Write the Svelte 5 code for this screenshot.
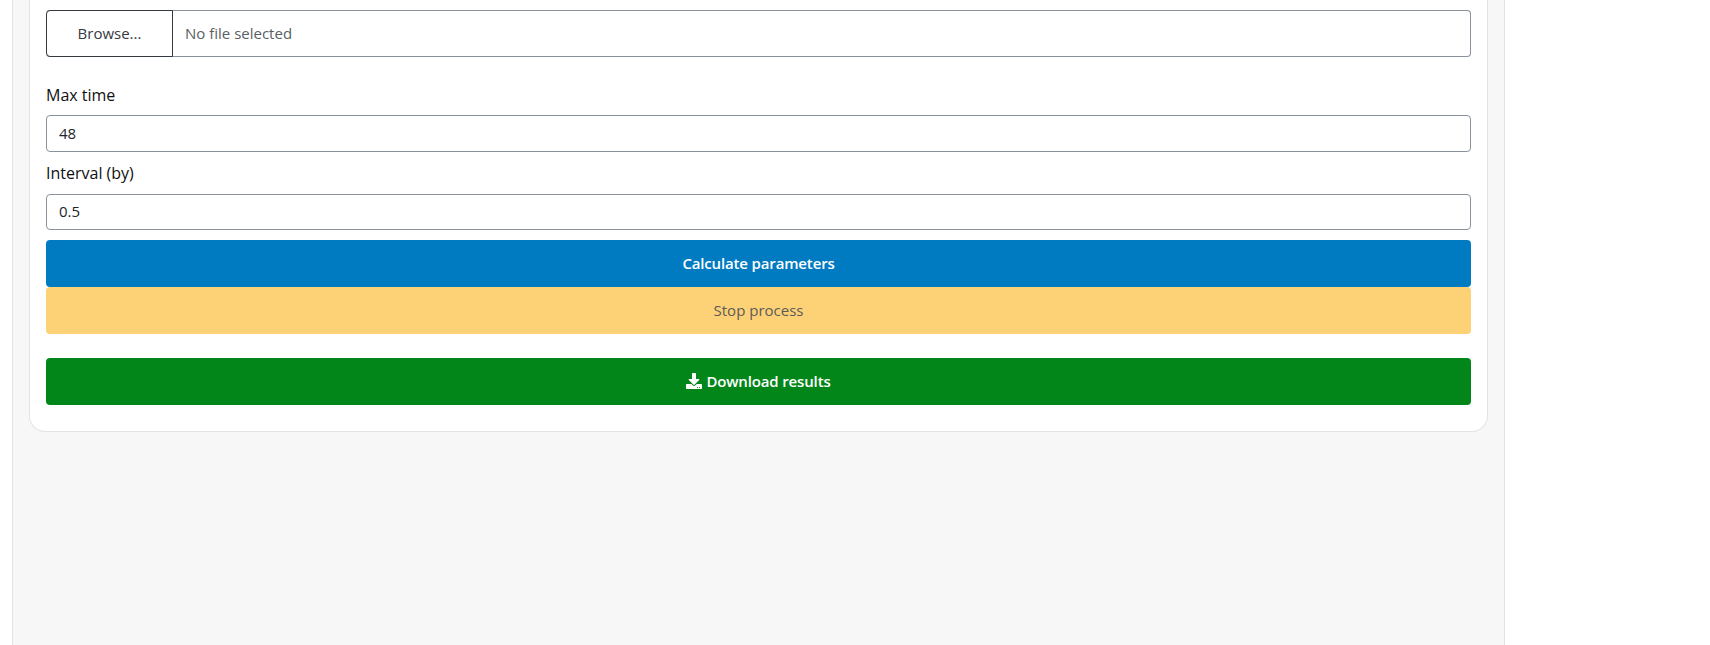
<script>
  let maxTime = '48';
  let interval = '0.5';
</script>

<div class="page">
  <div class="panel">
    <div class="card">
      <div class="file-row">
        <span class="browse">Browse...</span>
        <span class="file-name">No file selected</span>
      </div>

      <div class="field">
        <label for="max-time">Max time</label>
        <input id="max-time" type="text" bind:value={maxTime} />
      </div>
      <div class="field second">
        <label for="interval">Interval (by)</label>
        <input id="interval" type="text" bind:value={interval} />
      </div>

      <button class="btn primary">Calculate parameters</button>
      <button class="btn warning">Stop process</button>
      <button class="btn success">
        <svg viewBox="0 0 512 512" width="16" height="16" aria-hidden="true">
          <path fill="currentColor" d="M216 0h80c13.3 0 24 10.7 24 24v168h87.7c17.8 0 26.7 21.5 14.1 34.1L269.7 378.3c-7.5 7.5-19.8 7.5-27.3 0L90.1 226.1c-12.6-12.6-3.7-34.1 14.1-34.1H192V24c0-13.3 10.7-24 24-24zm296 376v112c0 13.3-10.7 24-24 24H24c-13.3 0-24-10.7-24-24V376c0-13.3 10.7-24 24-24h146.7l49 49c20.1 20.1 52.5 20.1 72.6 0l49-49H488c13.3 0 24 10.7 24 24zm-124 88c0-11-9-20-20-20s-20 9-20 20 9 20 20 20 20-9 20-20zm64 0c0-11-9-20-20-20s-20 9-20 20 9 20 20 20 20-9 20-20z" />
        </svg>
        Download results
      </button>
    </div>
  </div>
</div>

<style>
  :global(body) {
    margin: 0;
    background: #fff;
    font-family: "Open Sans", sans-serif;
    font-size: 16px;
    color: #212529;
  }

  .page {
    height: 645px;
    overflow: hidden;
    padding-left: 12px;
  }

  .panel {
    box-sizing: border-box;
    width: 1493px;
    height: 645px;
    padding: 0 16px;
    background: #f7f7f7;
    border-left: 1px solid #e3e3e3;
    border-right: 1px solid #e3e3e3;
  }

  .card {
    box-sizing: border-box;
    height: 432px;
    padding: 10px 16px 0;
    background: #fff;
    border: 1px solid #e3e3e3;
    border-top: none;
    border-radius: 0 0 16px 16px;
  }

  .file-row {
    display: flex;
    height: 47px;
    box-sizing: border-box;
    margin-bottom: 27px;
    border: 1px solid #8a939c;
    border-left: none;
    border-radius: 4px;
    font-size: 15px;
  }

  .browse {
    box-sizing: border-box;
    width: 127px;
    margin: -1px 0;
    padding-bottom: 2px;
    display: flex;
    align-items: center;
    justify-content: center;
    border: 1px solid #343a40;
    border-radius: 4px 0 0 4px;
    color: #343a40;
  }

  .file-name {
    display: flex;
    align-items: center;
    padding: 0 0 2px 12px;
    color: #595f64;
  }

  .field label {
    display: block;
    height: 22px;
    line-height: 22px;
    margin-bottom: 9px;
    color: #111;
  }

  .field input {
    display: block;
    box-sizing: border-box;
    width: 100%;
    height: 37px;
    padding: 0 12px 2px;
    border: 1px solid #8a939c;
    border-radius: 4px;
    background: #fff;
    font: inherit;
    font-size: 15px;
    color: #212529;
    outline: none;
  }

  .field.second {
    margin-top: 10px;
  }

  .field.second label {
    margin-bottom: 10px;
  }

  .field.second input {
    height: 36px;
  }

  .btn {
    display: flex;
    align-items: center;
    justify-content: center;
    gap: 4px;
    box-sizing: border-box;
    width: 100%;
    height: 47px;
    padding: 0 0 2px;
    border: none;
    border-radius: 4px;
    font: inherit;
    font-size: 15px;
    font-weight: 600;
    letter-spacing: -0.15px;
    color: #fff;
  }

  .primary {
    margin-top: 10px;
    background: #007bc2;
  }

  .warning {
    background: #fdd176;
    color: #5c5c58;
    font-weight: 400;
    letter-spacing: 0;
  }

  .success {
    margin-top: 24px;
    background: #02861a;
  }
</style>
